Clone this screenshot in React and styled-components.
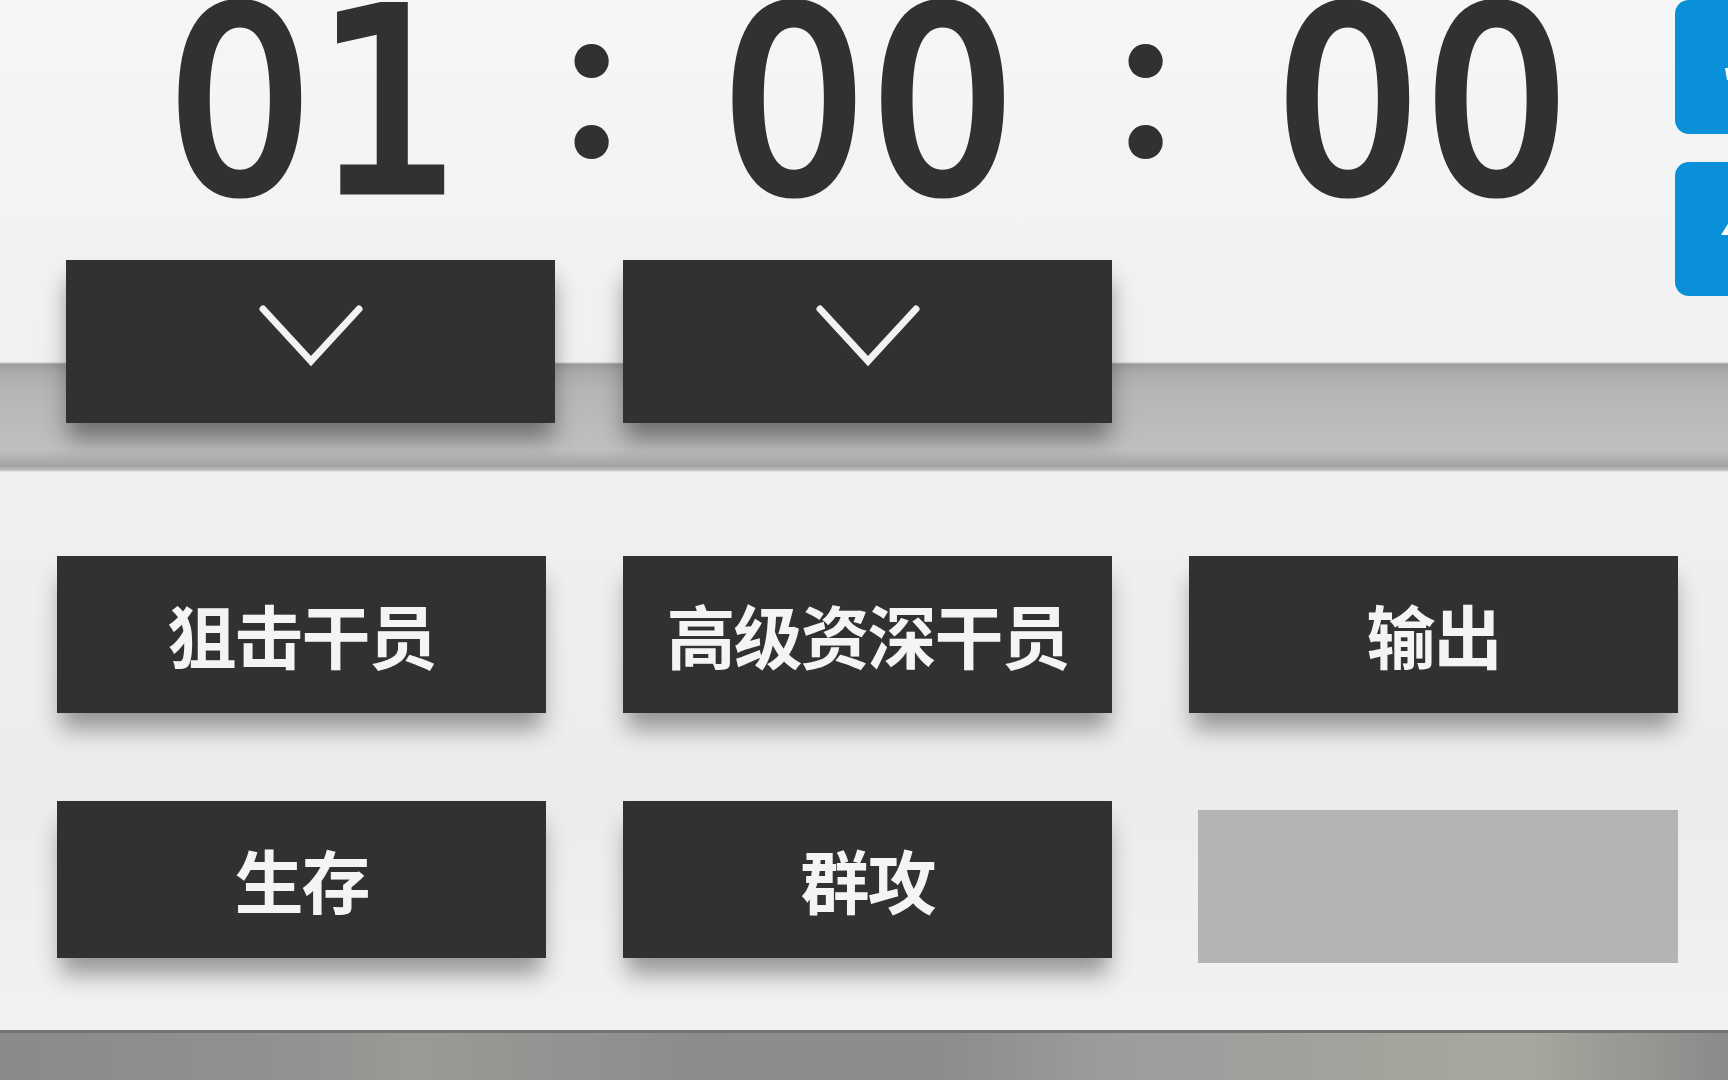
import styled, { createGlobalStyle } from "styled-components";

const GlobalStyle = createGlobalStyle`
  html, body {
    margin: 0;
    padding: 0;
    background: #efefef;
  }
  body {
    font-family: "Noto Sans CJK SC", "Noto Sans", sans-serif;
  }
`;

const Page = styled.div`
  width: 1728px;
  height: 1080px;
  overflow: hidden;
  display: flex;
  flex-direction: column;
  background: #efefef;
`;

const Header = styled.div`
  height: 472px;
  display: flex;
  flex-shrink: 0;
  background: linear-gradient(
    to bottom,
    #f6f6f6 0,
    #f1f1f1 362px,
    #9c9c9c 364px,
    #ababab 372px,
    #b6b6b6 390px,
    #c0c0c0 450px,
    #a4a4a4 466px,
    #bcbcbc 470px,
    #f0f0f0 472px
  );
`;

const Main = styled.div`
  display: flex;
  flex-direction: column;
`;

const Clock = styled.div`
  display: grid;
  grid-template-columns: repeat(5, 277px);
  margin-left: 176px;
  margin-top: -31px;
  height: 269px;
  font-family: "DejaVu Sans Condensed", "DejaVu Sans", sans-serif;
  font-stretch: condensed;
  font-size: 251px;
  line-height: 269px;
  color: #313131;
`;

const Digits = styled.span`
  text-align: center;
  letter-spacing: 5px;
  text-indent: -8px;
  white-space: nowrap;
  -webkit-text-stroke: 9px #313131;
`;

const Colon = styled.span`
  text-align: center;
  font-family: "Lato", sans-serif;
  font-weight: 700;
  font-size: 226px;
  transform: translateY(-34px);
`;

const Steppers = styled.div`
  display: flex;
  gap: 68px;
  margin-left: 66px;
  margin-top: 22px;
`;

const StepButton = styled.button`
  width: 489px;
  height: 163px;
  border: none;
  padding: 0 0 12px;
  background: #313131;
  box-shadow: 0 18px 22px -2px rgba(40, 40, 40, 0.5);
  display: flex;
  align-items: center;
  justify-content: center;
  cursor: pointer;
`;

const Side = styled.div`
  margin-left: auto;
  margin-right: -40px;
  width: 93px;
  display: flex;
  flex-direction: column;
  gap: 28px;
`;

const BlueButton = styled.div`
  height: 134px;
  border-radius: 14px;
  background: #0a90d8;
  display: flex;
  align-items: ${(p) => (p.$low ? "flex-end" : "center")};
  padding-left: 44px;
  padding-bottom: ${(p) => (p.$low ? "46px" : "0")};
  box-sizing: border-box;
`;

const Body = styled.div`
  flex: 1;
  padding: 84px 0 0 57px;
  background: linear-gradient(to bottom, #f0f0f0, #ececec 60%, #f2f2f2);
`;

const Grid = styled.div`
  display: grid;
  grid-template-columns: repeat(3, 489px);
  grid-auto-rows: 157px;
  column-gap: 77px;
  row-gap: 88px;
`;

const Tag = styled.button`
  border: none;
  background: #313131;
  color: #f4f4f4;
  font-family: "Noto Sans CJK SC", "Noto Sans", sans-serif;
  font-size: 69px;
  font-weight: 700;
  letter-spacing: -2px;
  box-shadow: 0 20px 22px -4px rgba(40, 40, 40, 0.45);
  display: flex;
  align-items: center;
  justify-content: center;
  padding: 0 0 2px;
  cursor: pointer;
`;

const EmptySlot = styled.div`
  margin: 9px 0 -5px 9px;
  background: #b4b4b4;
`;

const Footer = styled.div`
  height: 50px;
  flex-shrink: 0;
  background: linear-gradient(
      to right,
      #8a8a8c 0,
      #929292 18%,
      #9a9b95 24%,
      #8c8c8e 40%,
      #8d8d8d 55%,
      #9c9c9e 64%,
      #a3a49c 80%,
      #a8a89f 88%,
      #8a8a8a 100%
    ),
    #8d8d8d;
  border-top: 3px solid #737373;
  box-sizing: border-box;
`;

const Chevron = () => (
  <svg width="106" height="66" viewBox="0 0 106 66">
    <polyline
      points="5,6 53,58 101,6"
      fill="none"
      stroke="#f2f2f2"
      strokeWidth="7"
      strokeLinecap="round"
      strokeLinejoin="miter"
    />
  </svg>
);

const Sliver = ({ d }) => (
  <svg width="12" height="20" viewBox="0 0 12 20">
    <path d={d} fill="#ffffff" />
  </svg>
);

const tags = ["狙击干员", "高级资深干员", "输出", "生存", "群攻"];

export default function App() {
  return (
    <Page>
      <GlobalStyle />
      <Header>
        <Main>
          <Clock>
            <Digits>01</Digits>
            <Colon>:</Colon>
            <Digits>00</Digits>
            <Colon>:</Colon>
            <Digits>00</Digits>
          </Clock>
          <Steppers>
            <StepButton aria-label="hours down">
              <Chevron />
            </StepButton>
            <StepButton aria-label="minutes down">
              <Chevron />
            </StepButton>
          </Steppers>
        </Main>
        <Side>
          <BlueButton $low>
            <Sliver d="M6 0 L12 0 L12 12 L8 12 Z" />
          </BlueButton>
          <BlueButton>
            <Sliver d="M12 0 L12 16 L2 16 Z" />
          </BlueButton>
        </Side>
      </Header>
      <Body>
        <Grid>
          {tags.map((t) => (
            <Tag key={t}>{t}</Tag>
          ))}
          <EmptySlot />
        </Grid>
      </Body>
      <Footer />
    </Page>
  );
}
